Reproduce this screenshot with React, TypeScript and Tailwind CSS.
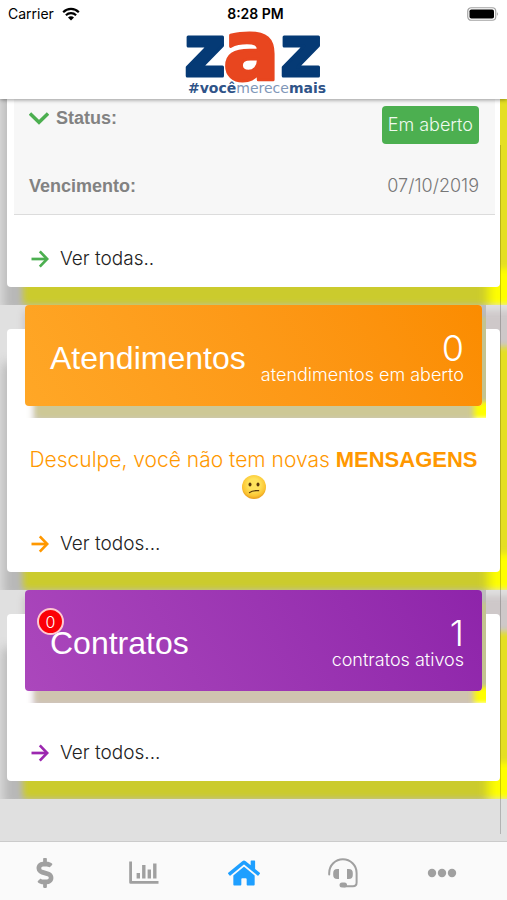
import type { ReactNode } from 'react'
import { FaDollarSign, FaHome } from 'react-icons/fa'

const cardShadow =
  'shadow-[-8px_30px_10px_-4px_rgba(117,117,117,0.38),16px_-18px_6px_rgba(155,130,135,0.26),16px_18px_6px_#ffff00]'

function Wifi() {
  return (
    <svg width="18" height="14" viewBox="0 0 18 14" fill="none" stroke="#000" aria-hidden="true">
      <path d="M1.2 5.2 A11 11 0 0 1 16.8 5.2" strokeWidth="2.2" />
      <path d="M3.9 8.2 A7.2 7.2 0 0 1 14.1 8.2" strokeWidth="2.1" />
      <path d="M9 13.4 L6 10.4 A4.2 4.2 0 0 1 12 10.4 Z" fill="#000" stroke="none" />
    </svg>
  )
}

function Battery() {
  return (
    <svg width="32" height="14" viewBox="0 0 32 14" aria-hidden="true">
      <rect x="0.75" y="0.75" width="28" height="12.5" rx="3.5" fill="none" stroke="#a3a3a3" strokeWidth="1.2" />
      <rect x="2.5" y="2.5" width="24.5" height="9" rx="1.8" fill="#000" />
      <path d="M30 5 Q31.6 7 30 9 Z" fill="#8a8a8a" />
    </svg>
  )
}

function Logo() {
  return (
    <svg
      width="144"
      height="66"
      viewBox="0 0 144 66"
      role="img"
      aria-label="zaz"
      fontFamily="DejaVu Sans"
      className="overflow-visible"
    >
      <g fontWeight="700" strokeWidth="3" strokeLinejoin="round">
        <text x="2" y="44" fontSize="72" fill="#053a75" stroke="#053a75">z</text>
        <text x="98" y="44" fontSize="72" fill="#053a75" stroke="#053a75">z</text>
        <text x="41" y="48" fontSize="84" fill="#e8461f" stroke="#e8461f">a</text>
      </g>
      <text x="6" y="61" fontSize="14" fill="#2f5488">
        <tspan fontWeight="700">#você</tspan>
        <tspan fill="#7f97b8">merece</tspan>
        <tspan fontWeight="700">mais</tspan>
      </text>
    </svg>
  )
}

function Arrow() {
  return (
    <svg width="18" height="18" viewBox="0 0 18 18" fill="none" stroke="currentColor" strokeWidth="2.7" aria-hidden="true">
      <path d="M0.5 9 H16" />
      <path d="M8.8 1.4 L16.2 9 L8.8 16.6" />
    </svg>
  )
}

function Confused() {
  return (
    <svg width="26" height="26" viewBox="0 0 26 26" role="img" aria-label="confuso">
      <defs>
        <radialGradient id="face" cx="50%" cy="40%" r="60%">
          <stop offset="0.4" stopColor="#ffe35c" />
          <stop offset="0.8" stopColor="#fbc432" />
          <stop offset="1" stopColor="#e89a1c" />
        </radialGradient>
      </defs>
      <circle cx="13" cy="13" r="12" fill="url(#face)" />
      <ellipse cx="9" cy="10.5" rx="1.5" ry="2.1" fill="#5c3a0c" />
      <ellipse cx="17" cy="10.5" rx="1.5" ry="2.1" fill="#5c3a0c" />
      <path d="M8.5 18.6 Q11 16.2 17.6 16.6" fill="none" stroke="#5c3a0c" strokeWidth="1.3" strokeLinecap="round" />
    </svg>
  )
}

function ChartIcon() {
  return (
    <svg width="30" height="24" viewBox="0 0 30 24" fill="none" stroke="currentColor" aria-hidden="true">
      <path d="M1.6 0.5 V21.4 H29.5" strokeWidth="2.8" strokeLinejoin="round" />
      <path d="M9.3 12 V17.5 M14.8 4 V17.5 M20.3 8.5 V17.5 M25.8 2.5 V17.5" strokeWidth="3.4" />
    </svg>
  )
}

function HeadsetIcon() {
  return (
    <svg width="30" height="30" viewBox="0 0 30 30" fill="none" stroke="currentColor" aria-hidden="true">
      <path d="M1.2 16.5 V15 A13.6 13.6 0 0 1 28.6 15 V24.5 Q28.6 28.2 25 28.2 H16" strokeWidth="2" strokeLinecap="round" />
      <path d="M11 11 V21 H9.2 A4 4 0 0 1 5.2 17 V15 A4 4 0 0 1 9.2 11 Z" fill="currentColor" stroke="none" />
      <path d="M19 11 V21 H20.8 A4 4 0 0 0 24.8 17 V15 A4 4 0 0 0 20.8 11 Z" fill="currentColor" stroke="none" />
      <rect x="11.5" y="24.5" width="7.5" height="5" rx="2.5" fill="currentColor" stroke="none" />
    </svg>
  )
}

function DotsIcon() {
  return (
    <svg width="30" height="10" viewBox="0 0 30 10" fill="currentColor" aria-hidden="true">
      <circle cx="5" cy="5" r="4.2" />
      <circle cx="15" cy="5" r="4.2" />
      <circle cx="25" cy="5" r="4.2" />
    </svg>
  )
}

function MoreLink({ color, children }: { color: string; children: ReactNode }) {
  return (
    <a href="#" className="flex items-center gap-[11px] px-6 pb-4 text-[19px] leading-6 text-[#222]">
      <span className={color}>
        <Arrow />
      </span>
      {children}
    </a>
  )
}

type SectionProps = {
  title: string
  count: number
  label: string
  banner: string
  badge?: number
  children: ReactNode
}

function Section({ title, count, label, banner, badge, children }: SectionProps) {
  return (
    <section className="overflow-hidden px-[7px] pb-[18px] pt-6">
      <div className={`flex flex-col rounded bg-white ${cardShadow}`}>
        {/* the banner hangs over the top edge of its card */}
        <div className="-mt-6 ml-2 mr-[14px] overflow-hidden pb-3 pl-[10px] pr-1">
          <div className={`relative flex h-[101px] items-center justify-between rounded pl-[25px] pr-[18px] text-white ${banner}`}>
            {badge !== undefined && (
              <span className="absolute left-3 top-[18px] flex size-[27px] items-center justify-center rounded-full border-2 border-[#ffc8d0] bg-[#fb0007] text-base font-light">
                {badge}
              </span>
            )}
            <h2 className="pt-1 font-['Liberation_Sans',sans-serif] text-[32px] leading-10">{title}</h2>
            <div className="flex flex-col items-end pt-2 font-light">
              <span className="text-[36px] leading-[30px]">{count}</span>
              <span className="text-[18px] leading-6">{label}</span>
            </div>
          </div>
        </div>
        {children}
      </div>
    </section>
  )
}

export default function App() {
  return (
    <div className="relative flex min-h-screen flex-col bg-[#e0e0e0] font-['Inter',sans-serif]">
      <header className="relative z-10 flex h-[99px] flex-col items-center bg-white shadow-[0_1px_4px_rgba(0,0,0,0.4)]">
        <div className="grid w-full grid-cols-3 items-center px-2 pt-1 text-[14px] leading-5 text-black">
          <span className="flex items-center gap-2">
            Carrier <Wifi />
          </span>
          <span className="pl-1 text-center font-semibold">8:28 PM</span>
          <span className="flex justify-end">
            <Battery />
          </span>
        </div>
        <h1 className="pt-2">
          <Logo />
        </h1>
      </header>

      <main className="flex-1">
        {/* scrolled partly under the header */}
        <section className="-mt-10 overflow-hidden px-[7px] pb-[18px]">
          <div className={`rounded bg-white font-light ${cardShadow}`}>
            <dl className="ml-[7px] mr-[5px] flex h-[156px] flex-col justify-between border-b border-[#dcdcdc] bg-[#f7f7f7] pb-4 pl-[15px] pr-4 pt-[47px] text-[18px] leading-6">
              <div className="flex items-start justify-between">
                <dt className="flex items-center gap-[7px] font-['Liberation_Sans',sans-serif] font-bold text-[#828282]">
                  <svg width="20" height="13" viewBox="0 0 20 13" fill="none" stroke="#4caf50" strokeWidth="3.4" aria-hidden="true">
                    <path d="M1 1.5 L10 10.3 L19 1.5" />
                  </svg>
                  Status:
                </dt>
                <dd className="rounded bg-[#4caf50] px-[6px] py-[7px] text-[#effaef]">Em aberto</dd>
              </div>
              <div className="flex justify-between">
                <dt className="font-['Liberation_Sans',sans-serif] font-bold text-[#828282]">Vencimento:</dt>
                <dd className="text-[#777]">07/10/2019</dd>
              </div>
            </dl>
            <div className="pt-8">
              <MoreLink color="text-[#4caf50]">Ver todas..</MoreLink>
            </div>
          </div>
        </section>

        <Section
          title="Atendimentos"
          count={0}
          label="atendimentos em aberto"
          banner="bg-linear-60 from-[#ffa726] to-[#fb8c00] shadow-[0_30px_6px_-8px_rgba(196,190,176,0.85),12px_-4px_4px_rgba(180,180,180,0.8),12px_12px_4px_#ffff00]"
        >
          <p className="flex flex-wrap justify-center gap-x-2 px-4 pt-7 text-[21px] font-light leading-7 text-[#ff9800]">
            <span>
              Desculpe, você não tem novas{' '}
              <b className="font-['Liberation_Sans',sans-serif] text-[22px] font-bold">MENSAGENS</b>
            </span>
            <Confused />
          </p>
          <div className="pt-8 font-light">
            <MoreLink color="text-[#ff9800]">Ver todos...</MoreLink>
          </div>
        </Section>

        <Section
          title="Contratos"
          count={1}
          label="contratos ativos"
          badge={0}
          banner="bg-linear-60 from-[#ab47bc] to-[#8e24aa] shadow-[0_30px_6px_-8px_rgba(202,190,194,0.9),12px_-4px_4px_rgba(180,180,180,0.8),12px_12px_4px_#ffff00]"
        >
          <div className="pt-[38px] font-light">
            <MoreLink color="text-[#9c27b0]">Ver todos...</MoreLink>
          </div>
        </Section>
      </main>

      {/* scroll indicator */}
      <div className="absolute bottom-[66px] right-[6px] top-[145px] w-px bg-black/20" />

      <nav className="flex h-[59px] items-center justify-between border-t border-[#cbcbcb] bg-[#fafafa] pl-[30px] pr-[50px] pt-1 text-[#a0a0a0]">
        <button aria-label="Financeiro">
          <FaDollarSign size={30} />
        </button>
        <button aria-label="Consumo">
          <ChartIcon />
        </button>
        <button className="text-[#1e9fff]" aria-label="Início">
          <FaHome size={32} />
        </button>
        <button aria-label="Atendimento">
          <HeadsetIcon />
        </button>
        <button aria-label="Mais">
          <DotsIcon />
        </button>
      </nav>
    </div>
  )
}
